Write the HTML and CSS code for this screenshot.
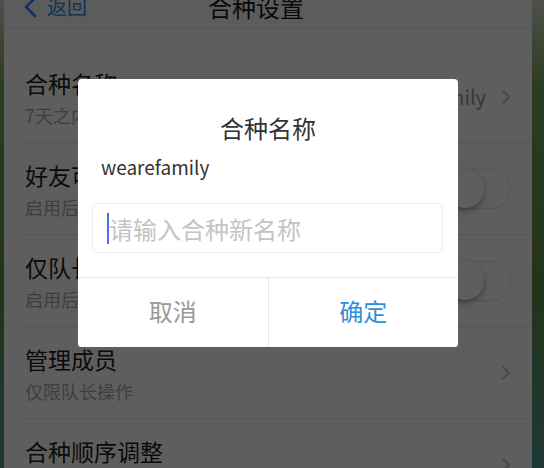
FILE: index.html
```html
<!DOCTYPE html>
<html lang="zh-CN">
<head>
    <meta charset="UTF-8">
    <meta name="viewport" content="width=device-width, initial-scale=1.0">
    <title>合种设置</title>
    <link rel="stylesheet" href="styles.css">
</head>
<body>
    <div class="screen">
        <!-- Nav Bar -->
        <div class="navbar">
            <div class="nav-back">
                <svg class="back-icon" width="14" height="22" viewBox="0 0 14 22">
                    <polyline points="12,2 3,11 12,20" fill="none" stroke="#2d8cf0" stroke-width="2.6" stroke-linecap="round" stroke-linejoin="round"/>
                </svg>
                <span>返回</span>
            </div>
            <div class="nav-title">合种设置</div>
        </div>

        <!-- Settings List -->
        <div class="list">
            <div class="row">
                <div class="row-text">
                    <div class="row-title">合种名称</div>
                    <div class="row-sub">7天之内只能修改一次</div>
                </div>
                <div class="row-right">
                    <span class="row-value">wearefamily</span>
                    <svg class="chevron" width="10" height="16" viewBox="0 0 10 16">
                        <polyline points="1.5,1.5 8,8 1.5,14.5" fill="none" stroke="#c7c7cc" stroke-width="2"/>
                    </svg>
                </div>
            </div>
            <div class="row">
                <div class="row-text">
                    <div class="row-title">好友可见</div>
                    <div class="row-sub">启用后好友可以看到</div>
                </div>
                <div class="row-right">
                    <div class="switch"><div class="knob"></div></div>
                </div>
            </div>
            <div class="row">
                <div class="row-text">
                    <div class="row-title">仅队长可浇水</div>
                    <div class="row-sub">启用后仅队长可以浇水</div>
                </div>
                <div class="row-right">
                    <div class="switch"><div class="knob"></div></div>
                </div>
            </div>
            <div class="row">
                <div class="row-text">
                    <div class="row-title">管理成员</div>
                    <div class="row-sub">仅限队长操作</div>
                </div>
                <div class="row-right">
                    <svg class="chevron" width="10" height="16" viewBox="0 0 10 16">
                        <polyline points="1.5,1.5 8,8 1.5,14.5" fill="none" stroke="#c7c7cc" stroke-width="2"/>
                    </svg>
                </div>
            </div>
            <div class="row">
                <div class="row-text">
                    <div class="row-title">合种顺序调整</div>
                </div>
                <div class="row-right">
                    <svg class="chevron" width="10" height="16" viewBox="0 0 10 16">
                        <polyline points="1.5,1.5 8,8 1.5,14.5" fill="none" stroke="#c7c7cc" stroke-width="2"/>
                    </svg>
                </div>
            </div>
        </div>

        <!-- Rename Dialog -->
        <div class="mask">
            <div class="dialog">
                <div class="dialog-title">合种名称</div>
                <div class="dialog-name">wearefamily</div>
                <div class="field">
                    <span class="caret"></span>
                    <span class="placeholder">请输入合种新名称</span>
                </div>
                <div class="dialog-buttons">
                    <button class="btn btn-cancel">取消</button>
                    <button class="btn btn-ok">确定</button>
                </div>
            </div>
        </div>
    </div>
</body>
</html>
```

FILE: styles.css
```css
* {
    margin: 0;
    padding: 0;
    box-sizing: border-box;
}

body {
    font-family: "Noto Sans CJK SC", "Noto Sans", sans-serif;
    height: 468px;
    overflow: hidden;
    background: linear-gradient(180deg, #4d5049 0%, #2c3c22 18%, #24331a 60%, #1d3836 100%);
}

.screen {
    position: relative;
    margin-left: 4px;
    width: 528px;
    height: 468px;
    overflow: hidden;
    background-color: #ffffff;
}

/* Nav Bar */
.navbar {
    display: flex;
    align-items: center;
    height: 44px;
    margin-top: -15px;
    margin-bottom: 22px;
    background-color: #f9f9f9;
    border-bottom: 1px solid #ececec;
}

.nav-back {
    display: flex;
    align-items: center;
    width: 204px;
    padding-left: 19px;
    color: #2d8cf0;
    font-size: 20px;
}

.back-icon {
    margin-right: 10px;
}

.nav-title {
    font-size: 24px;
    color: #1a1a1a;
}

/* List Rows */
.row {
    display: flex;
    align-items: center;
    height: 92px;
    margin-left: 21px;
    padding-right: 21px;
    border-bottom: 1px solid #e6e6e6;
}

.row-text {
    flex: 1;
    align-self: flex-start;
    padding-top: 17px;
}

.row-title {
    font-size: 23px;
    line-height: 30px;
    color: #1c1c1c;
}

.row-sub {
    margin-top: 5px;
    font-size: 18px;
    line-height: 24px;
    color: #a8a8a8;
}

.row-right {
    display: flex;
    align-items: center;
}

.row-value {
    margin-right: 15px;
    font-size: 20px;
    color: #9a9a9a;
}

.switch {
    position: relative;
    width: 66px;
    height: 40px;
    border-radius: 20px;
    border: 1.5px solid #e4e4e4;
    background-color: #ffffff;
}

.knob {
    position: absolute;
    left: -1px;
    top: -1px;
    width: 39px;
    height: 39px;
    border-radius: 50%;
    background-color: #ffffff;
    box-shadow: 0 3px 6px rgba(0, 0, 0, 0.35);
}

/* Dialog */
.mask {
    position: absolute;
    top: 0;
    left: 0;
    right: 0;
    bottom: 0;
    display: flex;
    justify-content: center;
    align-items: flex-start;
    padding-top: 79px;
    background-color: rgba(0, 0, 0, 0.63);
}

.dialog {
    width: 380px;
    background-color: #ffffff;
    border-radius: 4px;
    overflow: hidden;
}

.dialog-title {
    padding-top: 32px;
    font-size: 24px;
    line-height: 34px;
    color: #333;
    text-align: center;
}

.dialog-name {
    margin-top: 8px;
    padding-left: 23px;
    font-size: 19px;
    line-height: 28px;
    color: #333;
}

.field {
    display: flex;
    align-items: center;
    height: 50px;
    margin: 22px 15px 0 14px;
    padding-left: 14px;
    border: 1px solid #ebebeb;
    border-radius: 6px;
}

.caret {
    width: 2px;
    height: 31px;
    background-color: #4a6cf7;
}

.placeholder {
    font-size: 24px;
    color: #c4c4c4;
}

.dialog-buttons {
    display: flex;
    margin-top: 24px;
    border-top: 1px solid #e8e8e8;
}

.btn {
    flex: 1;
    height: 69px;
    padding-bottom: 4px;
    border: none;
    background-color: #ffffff;
    font-family: inherit;
    font-size: 24px;
    cursor: pointer;
}

.btn-cancel {
    color: #9a9a9a;
    border-right: 1px solid #e8e8e8;
}

.btn-ok {
    color: #2f8fd8;
}
```
